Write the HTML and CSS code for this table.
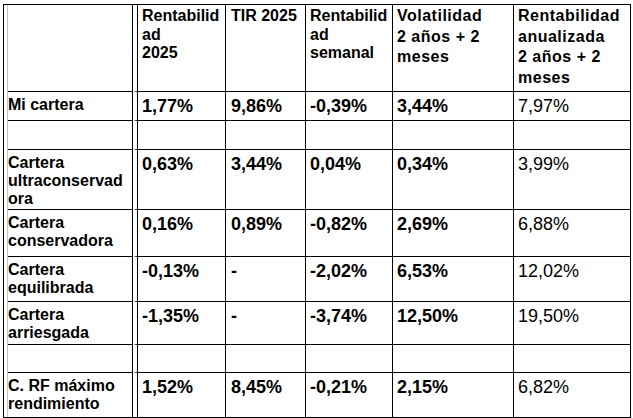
FILE: index.html
```html
<!DOCTYPE html>
<html lang="es">
<head>
<meta charset="utf-8">
<title>Rentabilidad de carteras</title>
<link rel="stylesheet" href="styles.css">
</head>
<body>
<div class="frame">
  <div class="inner">
    <table class="grid">
      <thead>
        <tr class="r-head">
          <th></th>
          <th>Rentabilidad<br>2025</th>
          <th>TIR 2025</th>
          <th>Rentabilidad semanal</th>
          <th class="wide">Volatilidad<br>2 años + 2 meses</th>
          <th class="wide">Rentabilidad<br>anualizada<br>2 años + 2 meses</th>
        </tr>
      </thead>
      <tbody>
        <tr class="r-29">
          <th>Mi cartera</th>
          <td>1,77%</td>
          <td>9,86%</td>
          <td>-0,39%</td>
          <td>3,44%</td>
          <td class="plain">7,97%</td>
        </tr>
        <tr class="r-29">
          <th></th><td></td><td></td><td></td><td></td><td></td>
        </tr>
        <tr class="r-60">
          <th>Cartera ultraconservadora</th>
          <td>0,63%</td>
          <td>3,44%</td>
          <td>0,04%</td>
          <td>0,34%</td>
          <td class="plain">3,99%</td>
        </tr>
        <tr class="r-47">
          <th>Cartera conservadora</th>
          <td>0,16%</td>
          <td>0,89%</td>
          <td>-0,82%</td>
          <td>2,69%</td>
          <td class="plain">6,88%</td>
        </tr>
        <tr class="r-45">
          <th>Cartera equilibrada</th>
          <td>-0,13%</td>
          <td>-</td>
          <td>-2,02%</td>
          <td>6,53%</td>
          <td class="plain">12,02%</td>
        </tr>
        <tr class="r-43">
          <th>Cartera arriesgada</th>
          <td>-1,35%</td>
          <td>-</td>
          <td>-3,74%</td>
          <td>12,50%</td>
          <td class="plain">19,50%</td>
        </tr>
        <tr class="r-28">
          <th></th><td></td><td></td><td></td><td></td><td></td>
        </tr>
        <tr class="r-44">
          <th>C. RF máximo rendimiento</th>
          <td>1,52%</td>
          <td>8,45%</td>
          <td>-0,21%</td>
          <td>2,15%</td>
          <td class="plain">6,82%</td>
        </tr>
      </tbody>
    </table>
  </div>
</div>
</body>
</html>
```

FILE: styles.css
```css
html, body {
  margin: 0;
  background: #fff;
}

body {
  padding: 4px 2px 0 3px;
  font-family: "Liberation Sans", Arial, sans-serif;
  color: #000;
}

.frame {
  border: 1px solid #000;
  padding-left: 3px;
}

.inner {
  border-left: 1px solid #c4c4c4;
}

.grid {
  width: 622px;
  table-layout: fixed;
  border-collapse: separate;
  border-spacing: 0;
}

.grid th,
.grid td {
  box-sizing: border-box;
  vertical-align: top;
  text-align: left;
  border-right: 1px solid #000;
  border-bottom: 1px solid #000;
  overflow-wrap: anywhere;
  padding: 4px 2px 0 4px;
}

.grid tr > :last-child {
  border-right: 0;
}

.grid tbody tr:last-child > * {
  border-bottom: 0;
}

/* column widths (border-box) */
.r-head > :nth-child(1) { width: 125px; }
.r-head > :nth-child(2) { width: 93px; }
.r-head > :nth-child(3) { width: 80px; }
.r-head > :nth-child(4) { width: 87px; }
.r-head > :nth-child(5) { width: 121px; }
.r-head > :nth-child(6) { width: 116px; }

/* first column: row labels */
.grid tr > :nth-child(1) {
  padding-left: 0;
  padding-right: 4px;
}

/* double rule between label column and data */
.grid tr > :nth-child(2) {
  border-left: 4px solid #fff;
  box-shadow: inset 1px 0 0 #000;
  padding-left: 5px;
}

.grid tr > :nth-child(3) {
  padding-left: 5px;
}

/* header row */
.r-head { height: 87px; }

.r-head th {
  font-size: 16px;
  font-weight: bold;
  line-height: 18.7px;
  padding-top: 2px;
}

.r-head th.wide {
  letter-spacing: 0.5px;
  line-height: 20.5px;
  padding-top: 1px;
}

/* body rows */
.r-29 { height: 29px; }
.r-60 { height: 60px; }
.r-47 { height: 47px; }
.r-45 { height: 45px; }
.r-43 { height: 43px; }
.r-28 { height: 28px; }
.r-44 { height: 44px; }

.grid tbody th {
  font-size: 16px;
  font-weight: bold;
  line-height: normal;
}

.grid tbody td {
  font-size: 18px;
  font-weight: bold;
  line-height: normal;
}

.grid tbody td.plain {
  font-weight: normal;
}
```
